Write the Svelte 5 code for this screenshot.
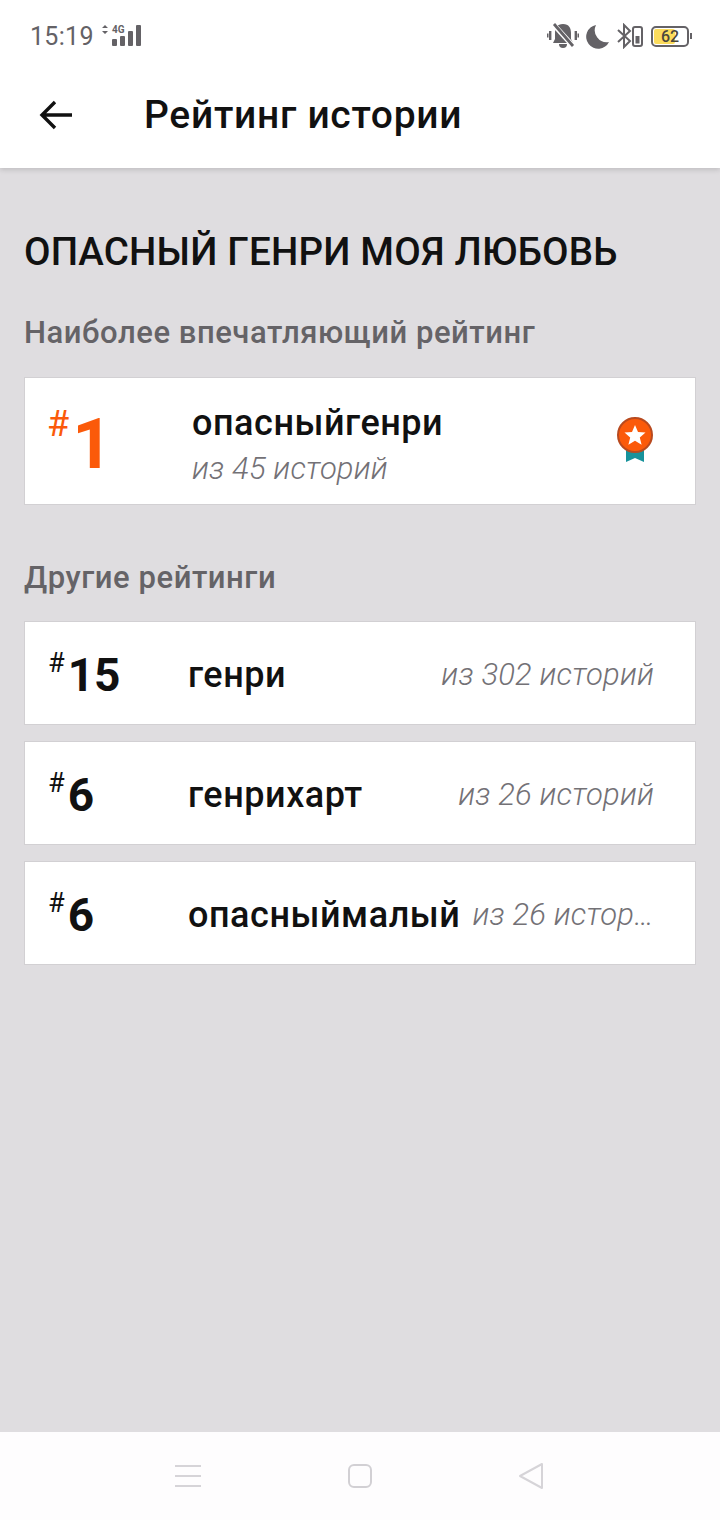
<script lang="ts">
  const others = [
    { rank: 15, tag: 'генри', total: 'из 302 историй' },
    { rank: 6, tag: 'генрихарт', total: 'из 26 историй' },
    { rank: 6, tag: 'опасныймалый', total: 'из 26 историй' },
  ];
</script>

<div class="screen">
  <div class="status">
    <div class="status-left">
      <span class="time">15:19</span>
      <svg class="signal" width="44" height="26" viewBox="0 0 44 26" fill="#646266">
        <path d="M3 5l3-3 3 3zM3 8l3 3 3-3z" />
        <rect x="13" y="16" width="5" height="7" rx="1" />
        <rect x="21" y="13" width="5" height="10" rx="1" />
        <rect x="29" y="8" width="5" height="15" rx="1" />
        <rect x="37" y="2" width="5" height="21" rx="1" />
        <text x="13" y="10" class="four-g">4G</text>
      </svg>
    </div>
    <div class="status-right">
      <svg width="32" height="28" viewBox="0 0 32 28" fill="#646266">
        <path d="M16 2c-6 0-8 4-8 9v6l-2 4h20l-2-4v-6c0-5-2-9-8-9z" />
        <path d="M12 22h8a4 4 0 0 1-8 0z" />
        <rect x="2" y="9" width="2.4" height="9" />
        <rect x="0" y="11.5" width="1.5" height="4" />
        <rect x="27.6" y="9" width="2.4" height="9" />
        <rect x="30.5" y="11.5" width="1.5" height="4" />
        <path d="M7 3l19 21" stroke="#fff" stroke-width="5" />
        <path d="M7 2l19 22" stroke="#646266" stroke-width="2.8" />
      </svg>
      <svg width="24" height="26" viewBox="0 0 24 26" fill="#646266">
        <path d="M10 2a12 12 0 0 0 13 17A12 12 0 1 1 10 2z" />
      </svg>
      <svg width="26" height="26" viewBox="0 0 26 26" fill="none" stroke="#646266">
        <path d="M1 7l12 11-6 6V2l6 6L1 19" stroke-width="2" />
        <rect x="16" y="4" width="9" height="19" rx="2" stroke-width="2" />
        <rect x="18.5" y="13" width="4" height="7.5" fill="#646266" stroke="none" />
      </svg>
      <div class="battery">
        <div class="battery-body"><span class="battery-fill"></span><span class="battery-num">62</span></div>
        <span class="battery-tip"></span>
      </div>
    </div>
  </div>

  <header class="appbar">
    <svg width="34" height="30" viewBox="0 0 34 30" fill="none" stroke="#111" stroke-width="3.4">
      <path d="M33 15H3M16 2L3 15l13 13" />
    </svg>
    <h1>Рейтинг истории</h1>
  </header>

  <main class="content">
    <h2>ОПАСНЫЙ ГЕНРИ МОЯ ЛЮБОВЬ</h2>

    <h3>Наиболее впечатляющий рейтинг</h3>
    <div class="card best">
      <div class="best-rank"><span class="hash">#</span><span class="best-num">1</span></div>
      <div class="best-info">
        <span class="tag">опасныйгенри</span>
        <span class="total">из 45 историй</span>
      </div>
      <svg class="medal" width="38" height="46" viewBox="0 0 38 46">
        <path d="M10 28h18v17l-9-4-9 4z" fill="#17929b" />
        <circle cx="19" cy="18" r="17" fill="#fb5a0a" stroke="#b84a1f" stroke-width="2" />
        <path d="M19 8l3 7 7.5.6-5.7 4.8 1.8 7.4-6.6-4-6.6 4 1.8-7.4-5.7-4.8L16 15z" fill="#fff" />
      </svg>
    </div>

    <h3 class="other-title">Другие рейтинги</h3>
    <div class="list">
      {#each others as row}
        <div class="card row">
          <div class="rank"><span class="hash-small">#</span><span class="num">{row.rank}</span></div>
          <span class="tag">{row.tag}</span>
          <span class="total row-total">{row.total}</span>
        </div>
      {/each}
    </div>
  </main>

  <nav class="navbar">
    <svg width="26" height="24" viewBox="0 0 26 24" stroke="#d6d4d8" stroke-width="2">
      <path d="M0 2h26M0 12h26M0 22h26" />
    </svg>
    <svg width="24" height="24" viewBox="0 0 24 24" fill="none" stroke="#d2d0d4" stroke-width="2">
      <rect x="1" y="1" width="22" height="22" rx="5" />
    </svg>
    <svg width="26" height="28" viewBox="0 0 26 28" fill="none" stroke="#d6d4d8" stroke-width="2" stroke-linejoin="round">
      <path d="M24 2v24L2 14z" />
    </svg>
  </nav>
</div>

<style>
  :global(body) {
    margin: 0;
    background: #dfdde0;
  }

  .screen {
    width: 720px;
    height: 1520px;
    display: flex;
    flex-direction: column;
    background: #dfdde0;
    font-family: Roboto, "Noto Sans", sans-serif;
    color: #111;
    overflow: hidden;
  }

  /* Status bar */
  .status {
    height: 72px;
    flex-shrink: 0;
    display: flex;
    justify-content: space-between;
    align-items: center;
    padding: 0 28px 0 30px;
    background: #fff;
    box-sizing: border-box;
  }
  .status-left { display: flex; align-items: center; gap: 5px; }
  .time { font-size: 25px; color: #646266; letter-spacing: 0.3px; }
  .four-g { font-size: 10px; font-weight: 700; fill: #646266; }
  .status-right { display: flex; align-items: center; gap: 7px; }
  .battery { display: flex; align-items: center; margin-left: 1px; }
  .battery-body {
    position: relative;
    width: 34px;
    height: 17px;
    border: 2px solid #646266;
    border-radius: 5px;
    overflow: hidden;
  }
  .battery-fill {
    position: absolute;
    left: 1px;
    top: 1px;
    bottom: 1px;
    width: 21px;
    background: #fbdc5c;
    border-radius: 2px;
  }
  .battery-num {
    position: absolute;
    inset: 0;
    text-align: center;
    font-size: 16px;
    line-height: 17px;
    font-weight: 500;
    color: #4a473c;
  }
  .battery-tip { width: 2px; height: 6px; background: #646266; margin-left: 1px; }

  /* App bar */
  .appbar {
    height: 96px;
    flex-shrink: 0;
    display: flex;
    align-items: center;
    padding: 0 0 10px 39px;
    box-sizing: border-box;
    background: #fff;
    box-shadow: 0 2px 5px rgba(0, 0, 0, 0.14);
    clip-path: inset(0 0 -12px 0);
    z-index: 1;
  }
  h1 {
    margin: 0 0 0 71px;
    font-size: 39px;
    font-weight: 500;
    letter-spacing: 0.7px;
    color: #111;
  }

  /* Content */
  .content {
    flex: 1;
    padding: 0 24px;
  }
  h2 {
    margin: 60px 0 0;
    font-size: 38.5px;
    line-height: 48px;
    font-weight: 500;
    letter-spacing: 0.2px;
    color: #111;
  }
  h3 {
    margin: 38px 0 0;
    font-size: 31px;
    line-height: 38px;
    font-weight: 500;
    letter-spacing: 0.55px;
    color: #656367;
  }
  .other-title { margin-top: 54px; }

  .card {
    background: #fff;
    border: 1px solid #d2d0d3;
    box-sizing: border-box;
  }
  .best {
    height: 128px;
    margin-top: 25px;
    display: flex;
    align-items: center;
    padding: 0 41px 0 24px;
  }
  .best-rank { width: 143px; display: flex; align-items: flex-start; color: #fb5a0a; height: 70px; }
  .hash { font-size: 36px; line-height: 36px; margin-left: -2px; }
  .best-num { font-size: 70px; line-height: 76px; font-weight: 700; margin-left: 3px; }
  .best-info { flex: 1; display: flex; flex-direction: column; gap: 6px; padding-top: 5px; }
  .medal { margin-top: -2px; }

  .tag { font-size: 36px; line-height: 44px; font-weight: 500; letter-spacing: 0.55px; color: #111; white-space: nowrap; }
  .total {
    font-size: 31px;
    line-height: 36px;
    font-weight: 300;
    font-style: italic;
    letter-spacing: 0.15px;
    color: #737176;
    white-space: nowrap;
  }

  .list { display: flex; flex-direction: column; gap: 16px; margin-top: 24px; }
  .row {
    height: 104px;
    display: flex;
    align-items: center;
    padding: 0 41px 0 24px;
  }
  .row .tag { padding-top: 4px; }
  .rank { width: 139px; flex-shrink: 0; display: flex; align-items: flex-start; padding-top: 3px; }
  .hash-small { font-size: 27px; line-height: 30px; margin-left: -1px; }
  .num { font-size: 46px; line-height: 54px; font-weight: 700; margin-left: 3px; }
  .row-total {
    flex: 1;
    min-width: 0;
    text-align: right;
    overflow: hidden;
    text-overflow: ellipsis;
    padding: 4px 0 0 12px;
  }

  /* Nav bar */
  .navbar {
    height: 88px;
    flex-shrink: 0;
    display: flex;
    align-items: center;
    justify-content: space-between;
    padding: 0 176px 0 175px;
    box-sizing: border-box;
    background: #fefdfe;
  }
</style>
